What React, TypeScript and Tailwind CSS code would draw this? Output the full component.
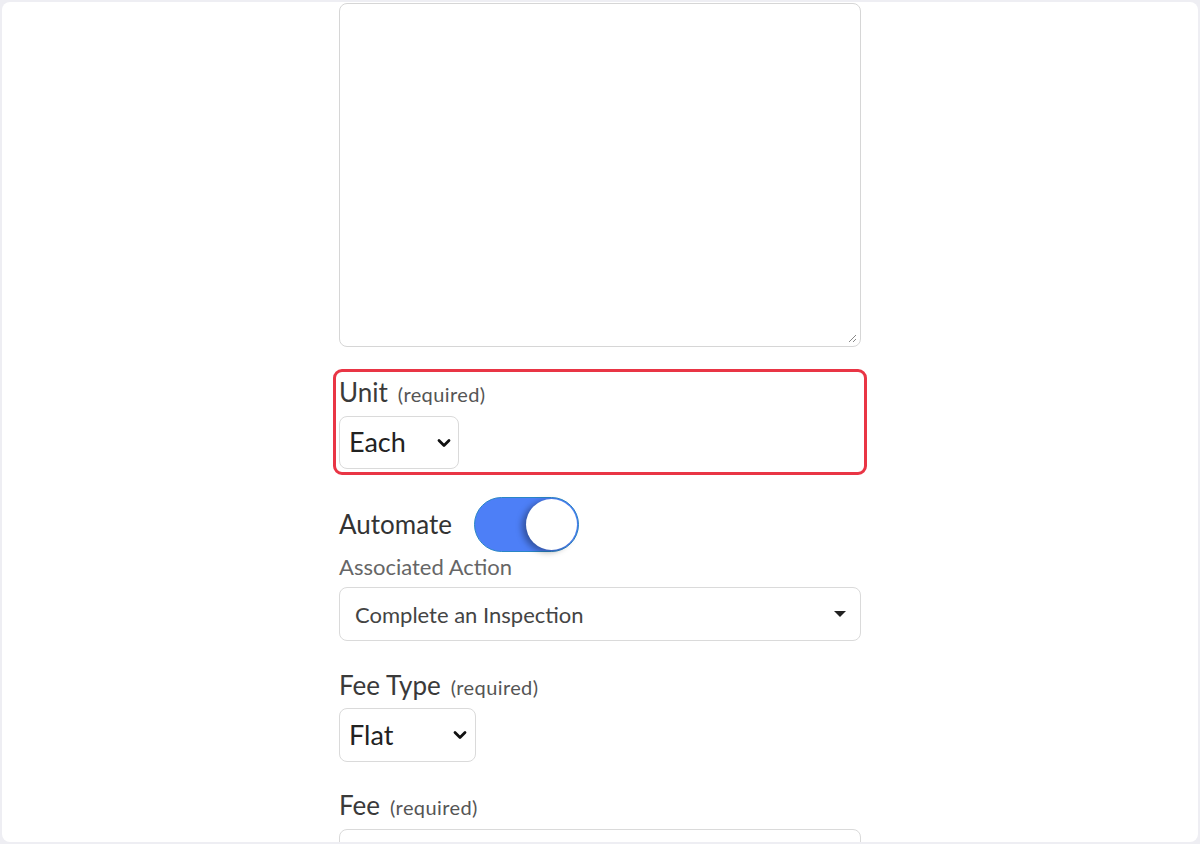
import React from "react";

const font = { fontFamily: "Lato, 'Open Sans', sans-serif" };

const Chevron = () => (
  <svg width="14" height="10" viewBox="0 0 14 10" className="shrink-0">
    <path d="M2 2.5 L7 7.5 L12 2.5" fill="none" stroke="#111" strokeWidth="2.8" strokeLinecap="round" strokeLinejoin="round" />
  </svg>
);

const Label = ({ text, className = "" }: { text: string; className?: string }) => (
  <div className={`h-[30px] flex items-center text-[26px] text-[#3a3a3a] ${className}`}>
    {text}
    <span className="ml-[10px] text-[20px] tracking-[0.4px] text-[#555] pt-[3px]">(required)</span>
  </div>
);

export default function App() {
  return (
    <div className="w-full h-[844px] bg-[#eeeef3] p-[2px]" style={font}>
      <div className="h-full w-full bg-white rounded-lg overflow-hidden">
        <div className="w-[522px] mx-auto flex flex-col">
          {/* Description */}
          <div className="relative mt-px h-[344px] rounded-lg border border-[#d6d6d6]">
            <svg width="12" height="12" viewBox="0 0 12 12" className="absolute right-[2px] bottom-[2px]">
              <path d="M10 3 L3 10 M10 7 L7 10" stroke="#888" strokeWidth="1" />
            </svg>
          </div>

          {/* Unit */}
          <div className="relative mt-[30px]">
            <div className="absolute -left-[6px] -right-[6px] -top-[8px] -bottom-[6px] border-[3px] border-[#e93545] rounded-[9px]" />
            <Label text="Unit" />
            <div className="mt-[9px] w-[120px] h-[53px] rounded-lg border border-[#dadada] flex items-center justify-between pl-[9px] pr-[7px] text-[27px] text-[#222]">
              Each
              <Chevron />
            </div>
          </div>

          {/* Automate */}
          <div className="mt-[28px] flex items-center">
            <span className="text-[26px] text-[#333]">Automate</span>
            <div className="ml-[22px] w-[105px] h-[55px] rounded-full bg-[#4d7ff7] border border-[#2a86c6] flex items-center justify-end pr-px">
              <div className="w-[51px] h-[51px] rounded-full bg-white shadow-[-4px_2px_6px_rgba(0,0,0,0.35)]" />
            </div>
          </div>
          <div className="mt-[2px] h-[24px] flex items-center text-[22px] text-[#666]">Associated Action</div>
          <div className="mt-[9px] h-[54px] rounded-lg border border-[#dadada] flex items-center justify-between pl-[15px] pr-[14px] text-[22px] text-[#444]">
            Complete an Inspection
            <svg width="12" height="7" viewBox="0 0 12 7">
              <path d="M0 0 H12 L6 6 Z" fill="#222" />
            </svg>
          </div>

          {/* Fee type */}
          <Label text="Fee Type" className="mt-[29px]" />
          <div className="mt-[8px] w-[137px] h-[54px] rounded-lg border border-[#dadada] flex items-center justify-between pl-[9px] pr-[8px] text-[27px] text-[#222]">
            Flat
            <Chevron />
          </div>

          {/* Fee */}
          <Label text="Fee" className="mt-[28px]" />
          <div className="mt-[9px] h-[54px] rounded-lg border border-[#dadada]" />
        </div>
      </div>
    </div>
  );
}
